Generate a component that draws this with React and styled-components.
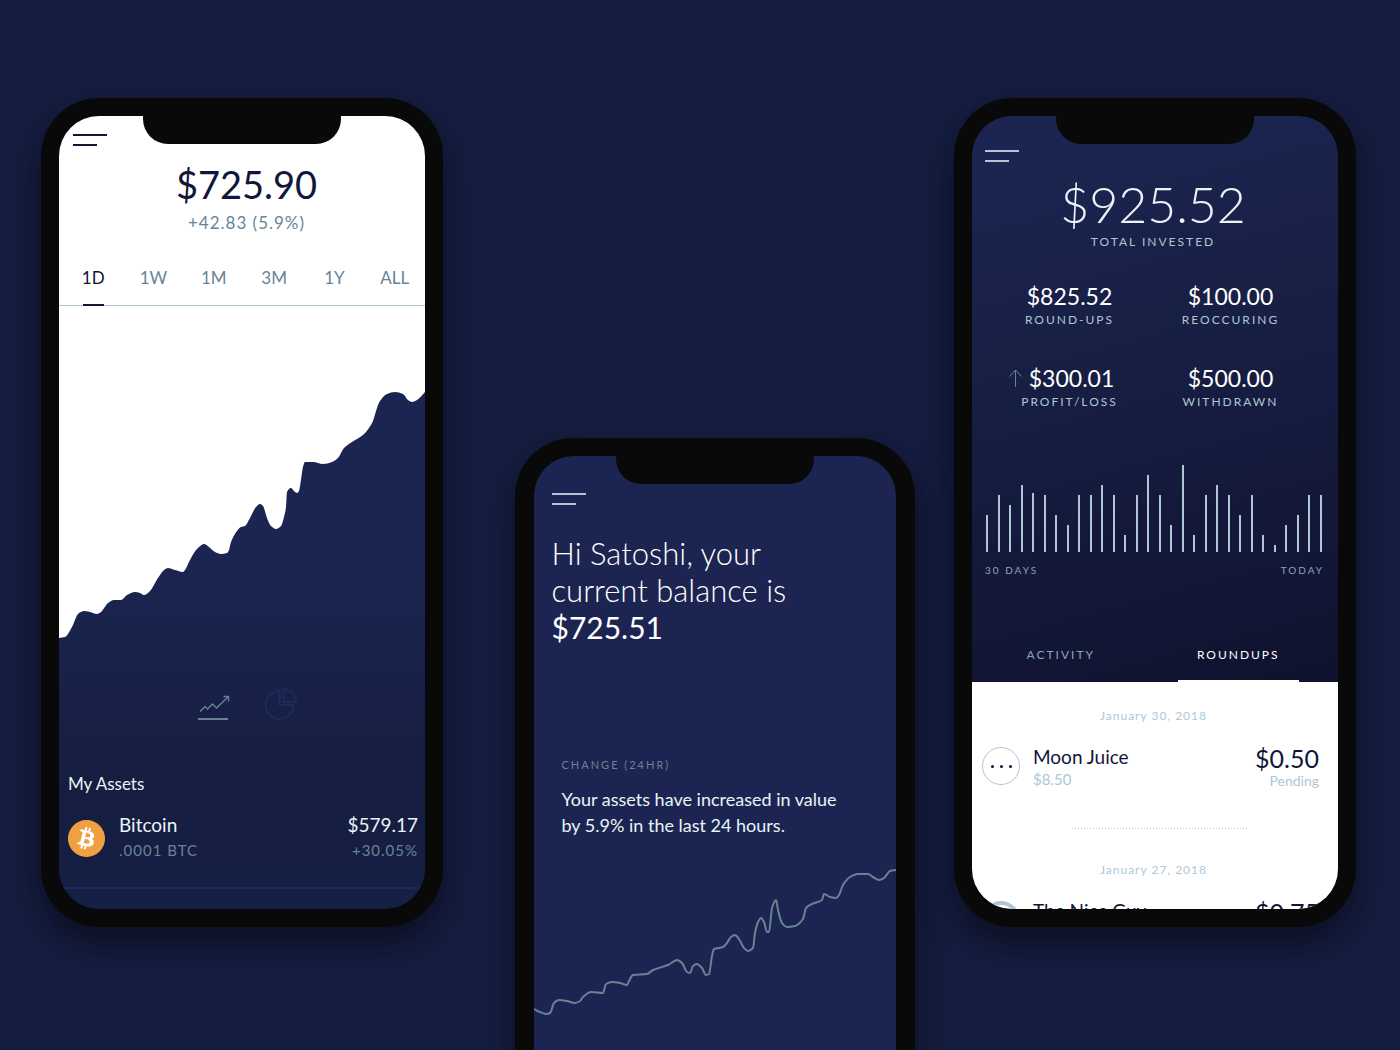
import React, { useState } from "react";
import styled, { createGlobalStyle } from "styled-components";
import { FaBitcoin } from "react-icons/fa";

const color = {
  page: "#151d40",
  indigo: "#1c2551",
  ink: "#11163a",
  slate: "#688494",
  mist: "#adc7d5",
  ice: "#e9f4f8",
  bezel: "#090909",
  coin: "#f0a040",
};

const GlobalStyle = createGlobalStyle`
  * { box-sizing: border-box; }
  body {
    margin: 0;
    background: ${color.page};
    font-family: Lato, "Liberation Sans", sans-serif;
  }
  h1, h2, p, ul, dl, dd { margin: 0; padding: 0; }
  ul { list-style: none; }
  button {
    margin: 0;
    padding: 0;
    border: 0;
    background: none;
    font: inherit;
    color: inherit;
    cursor: pointer;
  }
`;

/* ---------- shared frame ---------- */

const Stage = styled.main`
  display: grid;
  grid-template-columns: minmax(0, 402px) minmax(0, 400px) minmax(0, 402px);
  justify-content: space-between;
  align-items: start;
  height: 100vh;
  min-height: 960px;
  overflow: hidden;
  padding: 98px 44px 0 41px;
`;

const Phone = styled.section`
  position: relative;
  padding: 18px ${(p) => p.$side || 18}px;
  margin-top: ${(p) => p.$drop || 0}px;
  border-radius: 58px;
  background: ${color.bezel};
  box-shadow: 0 16px 32px rgba(6, 6, 14, 0.6);
`;

const MiddleColumn = styled.div`
  margin-left: 16px;
  margin-right: -16px;
`;

const Notch = styled.div`
  position: absolute;
  top: 18px;
  left: 50%;
  width: 198px;
  height: 28px;
  margin-left: -99px;
  border-radius: 0 0 25px 25px;
  background: ${color.bezel};
`;

const Screen = styled.div`
  display: flex;
  flex-direction: column;
  height: 793px;
  overflow: hidden;
  border-radius: 40px;
  background: ${(p) => p.$background};
`;

const MenuButton = styled.button`
  display: grid;
  gap: 8px;
  width: 34px;
  color: ${(p) => p.$tone};
`;

const MenuBar = styled.span`
  width: ${(p) => (p.$short ? 24 : 34)}px;
  height: 2px;
  background: currentColor;
`;

function Menu({ tone }) {
  return (
    <MenuButton $tone={tone} aria-label="Menu">
      <MenuBar />
      <MenuBar $short />
    </MenuButton>
  );
}

const Label = styled.p`
  font-size: ${(p) => p.$size || 12}px;
  line-height: 16px;
  letter-spacing: 2px;
  text-transform: uppercase;
  color: ${(p) => p.$tone || color.mist};
`;

/* Smooth curve through a list of points, never overshooting a peak. */
function smoothPath(points) {
  const n = points.length;
  const slope = [];
  for (let i = 0; i < n - 1; i++) {
    slope.push((points[i + 1][1] - points[i][1]) / (points[i + 1][0] - points[i][0]));
  }
  const tangent = points.map((_, i) => {
    if (i === 0) return slope[0];
    if (i === n - 1) return slope[n - 2];
    const a = slope[i - 1];
    const b = slope[i];
    return a * b <= 0 ? 0 : (2 * a * b) / (a + b);
  });
  let d = `M${points[0][0]} ${points[0][1]}`;
  for (let i = 0; i < n - 1; i++) {
    const [x0, y0] = points[i];
    const [x1, y1] = points[i + 1];
    const h = (x1 - x0) / 3;
    d += `C${x0 + h} ${y0 + tangent[i] * h} ${x1 - h} ${y1 - tangent[i + 1] * h} ${x1} ${y1}`;
  }
  return d;
}

/* ---------- portfolio ---------- */

const PortfolioTop = styled.header`
  padding: 18px 0 0 14px;
  background: #fff;
`;

const Summary = styled.div`
  padding: 14px 0 20px 9px;
  background: #fff;
  text-align: center;
`;

const Balance = styled.h1`
  font-size: 38px;
  line-height: 48px;
  font-weight: 400;
  color: ${color.ink};
`;

const Delta = styled.p`
  font-size: 17px;
  line-height: 30px;
  letter-spacing: 1px;
  color: ${color.slate};
`;

const RangeTabs = styled.div`
  display: grid;
  grid-template-columns: repeat(6, 1fr);
  padding-left: 4px;
  border-bottom: 1px solid ${color.mist};
  background: #fff;
`;

const RangeTab = styled.button`
  display: flex;
  flex-direction: column;
  align-items: center;
  justify-content: space-between;
  height: 48px;
  margin-bottom: -1px;
  font-size: 17px;
  line-height: 40px;
  color: ${(p) => (p.$active ? color.ink : color.slate)};

  &::after {
    content: "";
    width: 21px;
    height: 2px;
    background: ${(p) => (p.$active ? color.ink : "transparent")};
  }
`;

const AreaChart = styled.svg`
  display: block;
  width: 100%;
  height: 340px;
  flex: none;
`;

const ViewSwitch = styled.div`
  display: flex;
  justify-content: center;
  align-items: flex-end;
  gap: 35px;
  padding: 42px 0 0 10px;
`;

const ViewButton = styled.button`
  display: block;
  width: 32px;
  height: 32px;
  svg { display: block; }
`;

const Assets = styled.section`
  display: flex;
  flex-direction: column;
  padding: 52px 7px 0 9px;
`;

const SectionTitle = styled.h2`
  font-size: 17px;
  line-height: 24px;
  font-weight: 400;
  color: ${color.ice};
`;

const AssetRow = styled.div`
  display: grid;
  grid-template-columns: 37px 1fr auto;
  column-gap: 14px;
  align-items: start;
  padding: 16px 0 24px;
`;

const Coin = styled.span`
  display: grid;
  width: 37px;
  height: 37px;
  margin-top: 8px;
  border-radius: 50%;
  background: radial-gradient(circle, #fff 62%, ${color.coin} 64%);
  color: ${color.coin};
`;

const AssetText = styled.div`
  text-align: ${(p) => (p.$end ? "right" : "left")};
`;

const AssetMain = styled.p`
  font-size: 19px;
  line-height: 26px;
  color: ${color.ice};
`;

const AssetSub = styled.p`
  font-size: 15px;
  line-height: 25px;
  letter-spacing: 1px;
  color: ${color.slate};
`;

const Rule = styled.div`
  height: 2px;
  background: #1f2a5a;
`;

const portfolioPoints = [
  [0, 332], [6, 331], [13, 321], [19, 308], [25, 305], [31, 306], [38, 308], [42, 306],
  [49, 297], [55, 294], [62, 294], [68, 289], [76, 286], [81, 287], [85, 289], [91, 285],
  [99, 272], [105, 264], [109, 262], [116, 264], [124, 266], [126, 264], [131, 254],
  [138, 243], [145, 238], [150, 241], [156, 246], [162, 248], [168, 247], [170, 244],
  [172, 236], [178, 225], [182, 221], [186, 220], [191, 212], [197, 201], [201, 198],
  [204, 200], [208, 212], [212, 220], [217, 223], [222, 220], [225, 211], [227, 201],
  [228, 186], [232, 182], [235, 185], [238, 187], [240, 185], [242, 174], [244, 161],
  [246, 156], [254, 156], [264, 158], [273, 156], [279, 152], [285, 142], [293, 136],
  [304, 129], [310, 122], [314, 115], [317, 105], [321, 95], [328, 88], [336, 86],
  [344, 88], [349, 94], [353, 96], [358, 94], [366, 86],
];

const ranges = ["1D", "1W", "1M", "3M", "1Y", "ALL"];

function Portfolio() {
  const [range, setRange] = useState("1D");
  return (
    <Phone>
      <Screen $background={`linear-gradient(${color.indigo} 55%, ${color.page} 86%, #161f45)`}>
        <PortfolioTop>
          <Menu tone={color.ink} />
        </PortfolioTop>
        <Summary>
          <Balance>$725.90</Balance>
          <Delta>+42.83 (5.9%)</Delta>
        </Summary>
        <RangeTabs>
          {ranges.map((r) => (
            <RangeTab key={r} $active={r === range} onClick={() => setRange(r)}>
              {r}
            </RangeTab>
          ))}
        </RangeTabs>
        <AreaChart viewBox="0 0 366 340" preserveAspectRatio="none" aria-hidden="true">
          <path d={`${smoothPath(portfolioPoints)}L366 0L0 0Z`} fill="#fff" />
        </AreaChart>
        <ViewSwitch>
          <ViewButton aria-label="Performance">
            <svg width="32" height="32" viewBox="0 0 32 32" fill="none" stroke={color.slate}>
              <path d="M2 23.500L7 18.500L9.500 21L14.500 16L18.500 20L30 9" strokeWidth="1.400" />
              <path d="M25.500 8.500H30.500V13.500" strokeWidth="1.400" />
              <path d="M0 31H30" strokeWidth="2" />
            </svg>
          </ViewButton>
          <ViewButton aria-label="Allocation">
            <svg width="32" height="32" viewBox="0 0 32 32" fill="none" stroke="#1f2a5a" strokeWidth="2">
              <path d="M14.500 3A14 14 0 1 0 28.500 17H14.500Z" />
              <path d="M18.500 1A13 13 0 0 1 31 14H18.500Z" />
            </svg>
          </ViewButton>
        </ViewSwitch>
        <Assets>
          <SectionTitle>My Assets</SectionTitle>
          <AssetRow>
            <Coin>
              <FaBitcoin size={37} />
            </Coin>
            <AssetText>
              <AssetMain>Bitcoin</AssetMain>
              <AssetSub>.0001 BTC</AssetSub>
            </AssetText>
            <AssetText $end>
              <AssetMain>$579.17</AssetMain>
              <AssetSub>+30.05%</AssetSub>
            </AssetText>
          </AssetRow>
        </Assets>
        <Rule />
      </Screen>
      <Notch />
    </Phone>
  );
}

/* ---------- greeting ---------- */

const GreetingTop = styled.header`
  padding: 37px 18px 0;
`;

const Greeting = styled.h1`
  max-width: 290px;
  margin-top: 30px;
  font-size: 31px;
  line-height: 37px;
  font-weight: 300;
  color: #fff;
  strong {
    display: block;
    font-size: 30px;
    font-weight: 400;
  }
`;

const Change = styled.section`
  padding: 111px 20px 0 28px;
`;

const ChangeText = styled.p`
  max-width: 290px;
  margin-top: 13px;
  font-size: 18px;
  line-height: 26px;
  color: ${color.ice};
`;

const LineChart = styled.svg`
  display: block;
  width: 100%;
  height: 190px;
  flex: none;
  margin-top: 22px;
`;

const balancePoints = [
  [0, 149], [6, 152], [12, 154], [16, 153], [20, 143], [25, 140], [33, 141], [41, 143],
  [46, 141], [49, 137], [57, 132], [69, 133], [72, 124], [78, 122], [86, 123], [93, 125],
  [95, 121], [99, 115], [113, 114], [119, 110], [134, 105], [143, 100], [148, 103],
  [153, 112], [156, 113], [159, 106], [163, 104], [168, 108], [172, 115], [175, 114],
  [178, 96], [180, 89], [189, 87], [193, 83], [197, 77], [201, 75], [205, 79], [210, 88],
  [214, 91], [219, 88], [221, 73], [224, 62], [227, 58], [230, 62], [233, 72], [235, 72],
  [238, 48], [242, 40], [244, 50], [248, 63], [253, 67], [261, 66], [269, 59], [272, 48],
  [278, 44], [288, 40], [290, 34], [296, 37], [302, 38], [305, 35], [309, 25], [316, 17],
  [324, 14], [334, 14], [339, 17], [345, 20], [350, 18], [356, 11], [362, 10],
];

function Welcome() {
  return (
    <MiddleColumn>
      <Phone $side={19} $drop={340}>
        <Screen $background={color.indigo}>
          <GreetingTop>
            <Menu tone={color.mist} />
            <Greeting>
              Hi Satoshi, your current balance is <strong>$725.51</strong>
            </Greeting>
          </GreetingTop>
          <Change>
            <Label $size={11} $tone={color.slate}>Change (24hr)</Label>
            <ChangeText>
              Your assets have increased in value by 5.9% in the last 24 hours.
            </ChangeText>
          </Change>
          <LineChart viewBox="0 0 362 190" preserveAspectRatio="none" aria-hidden="true">
            <path d={smoothPath(balancePoints)} fill="none" stroke={color.slate} strokeWidth="2" />
          </LineChart>
        </Screen>
        <Notch />
      </Phone>
    </MiddleColumn>
  );
}

/* ---------- investments ---------- */

const InvestTop = styled.header`
  padding: 34px 0 0 13px;
`;

const Total = styled.div`
  margin-top: 12px;
  padding-right: 4px;
  text-align: center;
`;

const TotalValue = styled.h1`
  font-size: 50px;
  line-height: 60px;
  font-weight: 300;
  color: ${color.ice};
`;

const Stats = styled.dl`
  display: grid;
  grid-template-columns: 1fr 1fr;
  row-gap: 34px;
  margin: 0;
  padding: 32px 27px 0 17px;
  text-align: center;
`;

const Stat = styled.div`
  display: flex;
  flex-direction: column-reverse;
`;

const StatLabel = styled.dt`
  font-size: 12px;
  line-height: 20px;
  letter-spacing: 2px;
  text-transform: uppercase;
  color: ${color.mist};
`;

const StatValue = styled.dd`
  display: flex;
  justify-content: center;
  align-items: center;
  gap: 7px;
  font-size: 23px;
  line-height: 28px;
  padding-right: ${(p) => (p.$arrow ? 16 : 0)}px;
  color: #fff;
`;

const Bars = styled.div`
  display: flex;
  justify-content: space-between;
  align-items: flex-end;
  height: 87px;
  margin: 53px 16px 0 14px;
`;

const Bar = styled.span`
  width: 2px;
  background: ${color.mist};
`;

const Axis = styled.div`
  display: flex;
  justify-content: space-between;
  padding: 10px 14px 0 13px;
`;

const ListTabs = styled.div`
  display: grid;
  grid-template-columns: 1fr 1fr;
  justify-items: center;
  padding: 63px 11px 0 0;
`;

const ListTab = styled.button`
  width: 121px;
  height: 41px;
  padding-bottom: 12px;
  border-bottom: 2px solid ${(p) => (p.$active ? "#fff" : "transparent")};
  font-size: 12px;
  line-height: 20px;
  letter-spacing: 2px;
  text-transform: uppercase;
  color: ${(p) => (p.$active ? "#fff" : "#8ba5b6")};
`;

const Feed = styled.ul`
  flex: 1 0 auto;
  height: 227px;
  background: #fff;
`;

const FeedItem = styled.li`
  height: 154px;
  padding: 24px 19px 0 10px;
`;

const FeedDate = styled.p`
  font-size: 12px;
  line-height: 20px;
  letter-spacing: 1px;
  padding-left: 6px;
  text-align: center;
  color: ${color.mist};
`;

const FeedRow = styled.div`
  display: grid;
  grid-template-columns: 38px 1fr auto;
  column-gap: 13px;
  margin-top: 18px;
`;

const Badge = styled.span`
  display: flex;
  align-items: center;
  justify-content: center;
  gap: 6px;
  width: 38px;
  height: 38px;
  margin-top: 3px;
  border: ${(p) => (p.$ring ? 4 : 1)}px solid ${color.mist};
  border-radius: 50%;
`;

const Dot = styled.span`
  width: 3px;
  height: 3px;
  border-radius: 50%;
  background: ${color.ink};
`;

const FeedText = styled.div`
  text-align: ${(p) => (p.$end ? "right" : "left")};
  color: ${color.mist};
`;

const FeedName = styled.p`
  font-size: 19px;
  line-height: 25px;
  color: ${color.ink};
`;

const FeedAmount = styled.p`
  font-size: 25px;
  line-height: 28px;
  color: ${color.ink};
`;

const FeedNote = styled.p`
  font-size: ${(p) => (p.$small ? 14 : 15)}px;
  line-height: ${(p) => (p.$small ? 17 : 21)}px;
`;

const FeedRule = styled.div`
  height: 1px;
  margin: 38px 72px 0 90px;
  background: repeating-linear-gradient(90deg, ${color.mist} 0 1px, transparent 1px 3px);
`;

const bars = [
  37, 57, 47, 67, 59, 57, 37, 27, 57, 57, 67, 57, 17, 57, 77, 57, 27, 87, 17, 57, 67, 57, 37,
  57, 17, 7, 27, 37, 57, 57,
];

const stats = [
  { label: "Round-ups", value: "$825.52" },
  { label: "Reoccuring", value: "$100.00" },
  { label: "Profit/Loss", value: "$300.01", up: true },
  { label: "Withdrawn", value: "$500.00" },
];

function Investments() {
  const [tab, setTab] = useState("Roundups");
  return (
    <Phone>
      <Screen $background={`linear-gradient(165deg, ${color.indigo} 5%, #171f44 30%, #131738 58%, #0f122c 75%)`}>
        <InvestTop>
          <Menu tone={color.mist} />
        </InvestTop>
        <Total>
          <TotalValue>$925.52</TotalValue>
          <Label>Total Invested</Label>
        </Total>
        <Stats>
          {stats.map((s) => (
            <Stat key={s.label}>
              <StatLabel>{s.label}</StatLabel>
              <StatValue $arrow={s.up}>
                {s.up && (
                  <svg width="13" height="18" viewBox="0 0 13 18" fill="none" stroke={color.slate} aria-hidden="true">
                    <path d="M6.500 18V1M0.500 7.500L6.500 1L12.500 7.500" />
                  </svg>
                )}
                {s.value}
              </StatValue>
            </Stat>
          ))}
        </Stats>
        <Bars>
          {bars.map((h, i) => (
            <Bar key={i} style={{ height: h }} />
          ))}
        </Bars>
        <Axis>
          <Label $size={10} $tone="#8ba5b6">30 Days</Label>
          <Label $size={10} $tone="#8ba5b6">Today</Label>
        </Axis>
        <ListTabs>
          {["Activity", "Roundups"].map((t) => (
            <ListTab key={t} $active={t === tab} onClick={() => setTab(t)}>
              {t}
            </ListTab>
          ))}
        </ListTabs>
        <Feed>
          <FeedItem>
            <FeedDate>January 30, 2018</FeedDate>
            <FeedRow>
              <Badge>
                <Dot />
                <Dot />
                <Dot />
              </Badge>
              <FeedText>
                <FeedName>Moon Juice</FeedName>
                <FeedNote>$8.50</FeedNote>
              </FeedText>
              <FeedText $end>
                <FeedAmount>$0.50</FeedAmount>
                <FeedNote $small>Pending</FeedNote>
              </FeedText>
            </FeedRow>
            <FeedRule />
          </FeedItem>
          <FeedItem>
            <FeedDate>January 27, 2018</FeedDate>
            <FeedRow>
              <Badge $ring />
              <FeedText>
                <FeedName>The Nice Guy</FeedName>
              </FeedText>
              <FeedText $end>
                <FeedAmount>$0.75</FeedAmount>
              </FeedText>
            </FeedRow>
          </FeedItem>
        </Feed>
      </Screen>
      <Notch />
    </Phone>
  );
}

export default function App() {
  return (
    <>
      <GlobalStyle />
      <Stage>
        <Portfolio />
        <Welcome />
        <Investments />
      </Stage>
    </>
  );
}
